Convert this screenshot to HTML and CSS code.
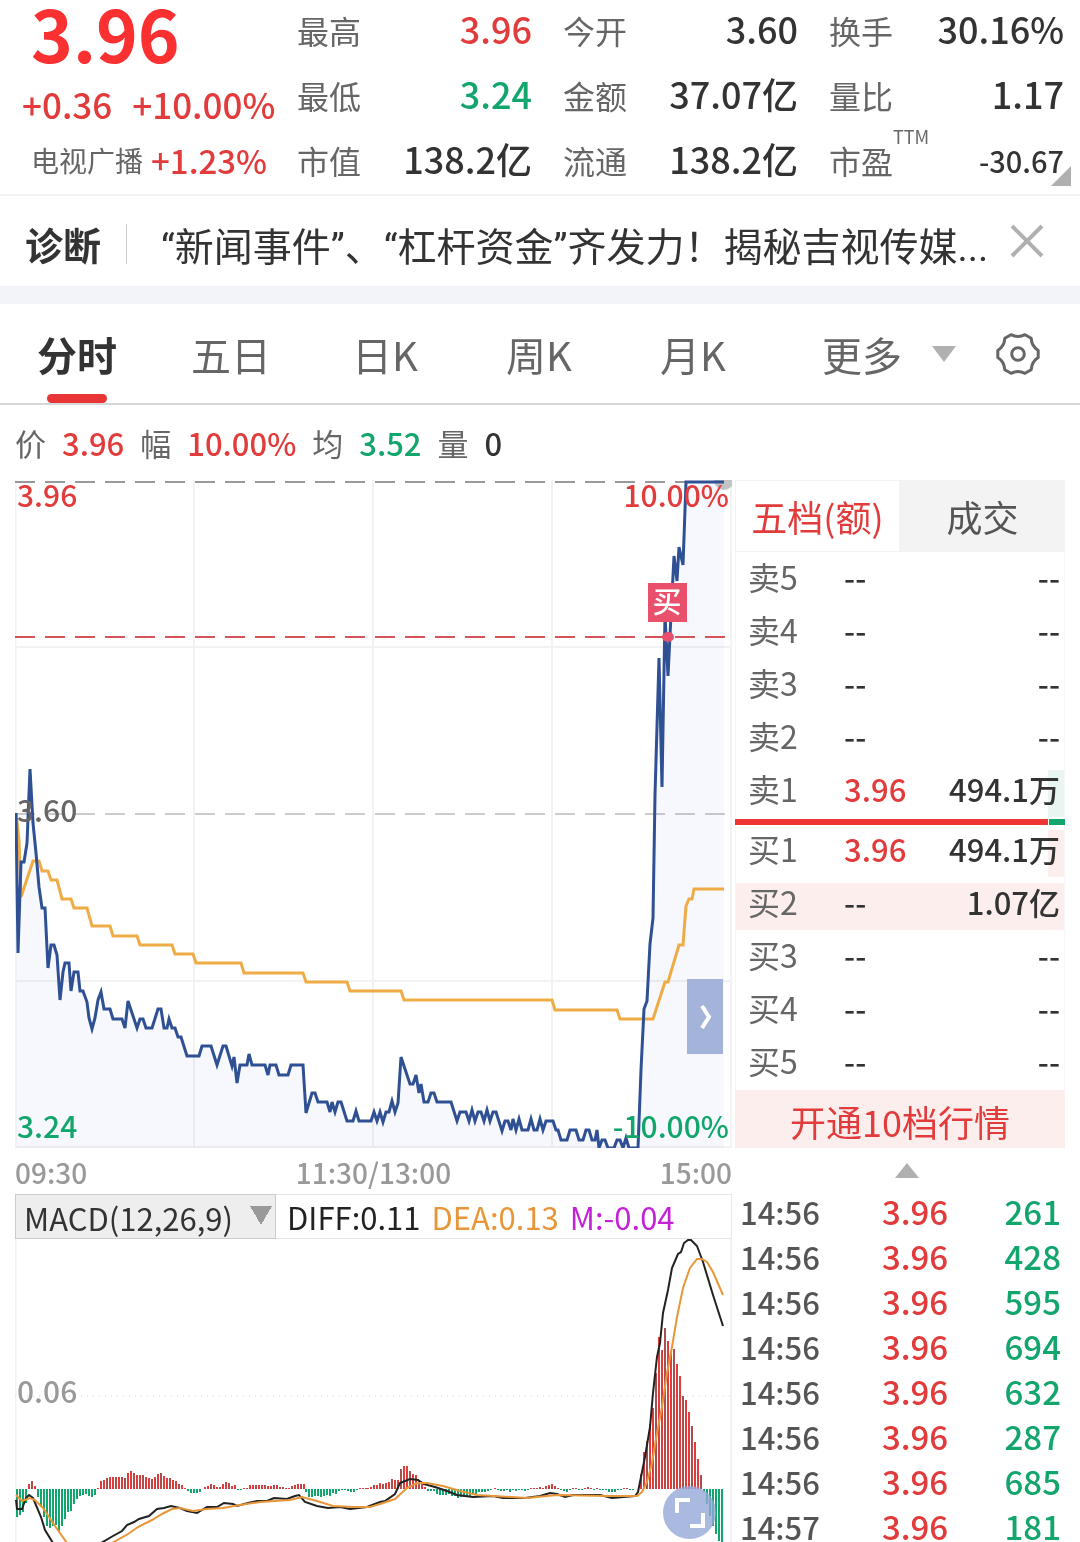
FILE: index.html
```html
<!DOCTYPE html>
<html lang="zh-CN">
<head>
    <meta charset="UTF-8">
    <meta name="viewport" content="width=device-width, initial-scale=1.0">
    <title>吉视传媒 分时</title>
    <link rel="stylesheet" href="styles.css">
</head>
<body>
<div class="page">

    <header class="quote">
        <div class="quote-main">
            <div class="price">3.96</div>
            <div class="change"><span>+0.36</span><span>+10.00%</span></div>
            <div class="sector"><span class="sector-name">电视广播</span><span>+1.23%</span></div>
        </div>
        <dl class="stats">
            <div><dt>最高</dt><dd class="up">3.96</dd></div>
            <div><dt>最低</dt><dd class="down">3.24</dd></div>
            <div><dt>市值</dt><dd>138.2亿</dd></div>
        </dl>
        <dl class="stats">
            <div><dt>今开</dt><dd>3.60</dd></div>
            <div><dt>金额</dt><dd>37.07亿</dd></div>
            <div><dt>流通</dt><dd>138.2亿</dd></div>
        </dl>
        <dl class="stats">
            <div><dt>换手</dt><dd>30.16%</dd></div>
            <div><dt>量比</dt><dd>1.17</dd></div>
            <div><dt>市盈<sup>TTM</sup></dt><dd class="small">-30.67</dd></div>
        </dl>
        <span class="corner"></span>
    </header>

    <div class="notice">
        <strong>诊断</strong>
        <a href="#news">“新闻事件”、“杠杆资金”齐发力！揭秘吉视传媒...</a>
        <button type="button" aria-label="关闭">
            <svg width="34" height="34" viewBox="0 0 34 34"><path d="M2 2L32 32M32 2L2 32" stroke="#b0b0b0" stroke-width="4" fill="none"/></svg>
        </button>
    </div>

    <nav class="tabs">
        <button type="button" class="tab active">分时</button>
        <button type="button" class="tab">五日</button>
        <button type="button" class="tab">日K</button>
        <button type="button" class="tab">周K</button>
        <button type="button" class="tab">月K</button>
        <button type="button" class="tab more">更多
            <svg width="24" height="16" viewBox="0 0 24 16"><path d="M0 0H24L12 16Z" fill="#b0b0b0"/></svg>
        </button>
        <button type="button" class="gear" aria-label="设置">
            <svg width="44" height="44" viewBox="0 0 44 44" fill="none" stroke="#666" stroke-width="3" stroke-linejoin="round">
                <path d="M42.2 25.6Q35.6 29.9 35.2 37.7L29 41.3Q22 37.7 15 41.3L8.8 37.7Q8.4 29.9 1.8 25.6V18.4Q8.4 14.1 8.8 6.3L15 2.7Q22 6.3 29 2.7L35.2 6.3Q35.6 14.1 42.2 18.4Z"/>
                <circle cx="22" cy="22" r="6.3"/>
            </svg>
        </button>
    </nav>

    <div class="info">
        <span>价</span><b class="up">3.96</b>
        <span>幅</span><b class="up">10.00%</b>
        <span>均</span><b class="down">3.52</b>
        <span>量</span><b>0</b>
    </div>

    <main class="board">
        <section class="charts">
            <div class="chart">
                <svg viewBox="15 480 717 668">
                    <path class="grid" d="M15.5 480V1148M194 480V1148M373 480V1148M552 480V1148M731 480V1148M15 647H732M15 981H732M15 1147H732"/>
                    <path class="dash dark" d="M15 482H725"/>
                    <path class="dash light" d="M15 814H725"/>
                    <circle cx="724" cy="480" r="10" fill="#c4c4c4"/>
                    <path class="area" id="area"/>
                    <path class="line avg" d="M16 813L19 840L21 897L33 861H39L42 871H48L51 880H57L62 899H71L74 908H87L92 926H110L113 936H137L140 945H172L175 954H193L196 963H241L244 973H303L306 982H347L350 991H401L404 1000H552L555 1010H617L620 1019H653L665 982H668L679 945H683L686 906L689 899H692L694 889H724"/>
                    <path class="line price-line" id="line" d="M16 813L18 953L21 862H24L27 843L30 769L33 823L36 853L39 887L42 908H45L48 968L51 945H54L57 955L60 1000L63 972L65 963H69L71 991L74 972H78L80 991H83L87 1002L89 1018L92 1029L95 1018L98 1000L101 992L104 1009H110L113 1019H122L125 1028L128 1001L137 1028L140 1019H143L146 1028H152L158 1009H161L164 1028H167L169 1019L172 1028H175L178 1037H181L187 1056H199L202 1046H211L217 1065L223 1046H226L232 1066L234 1057L237 1083L240 1065H247L249 1054L252 1065H265L268 1075L270 1065H276L279 1075H288L291 1065H303L306 1113L312 1093H315L318 1102H327L330 1112L332 1102L335 1112L338 1102H341L347 1121H353L356 1111L359 1121H371L374 1112L377 1121L380 1112L383 1122L386 1112H389L392 1101L395 1112L398 1103L401 1057L410 1084H413L416 1075L419 1093L421 1084L424 1102H428L431 1093H434L437 1102H451L457 1121L460 1112H466L469 1121L472 1110L475 1121L478 1112H481L484 1121L487 1110L490 1121L493 1112H496L502 1131L505 1121H508L511 1130L513 1119L516 1130L519 1119L522 1130H528L531 1119L534 1130H537L540 1119L543 1130L546 1121H553L556 1130H558L561 1140H567L570 1130H576L579 1140H583L586 1130H589L592 1140H595L597 1130L599 1148L602 1140H605L608 1148H614L617 1140H620L623 1148L626 1138L629 1148H638L641 1070L644 1009L647 1001L650 944L653 918L655 795L659 658L662 787L665 615L668 676L671 615L674 556L677 581L679 547L683 565L686 482H724"/>
                    <path class="dash red" d="M15 637H725"/>
                    <ellipse cx="668" cy="637" rx="6" ry="5" fill="#e8506b"/>
                    <rect x="648" y="583" width="39" height="39" fill="#e8506b"/>
                    <text class="mark" x="667" y="613" text-anchor="middle">买</text>
                </svg>
                <span class="tag top left up">3.96</span>
                <span class="tag top right up">10.00%</span>
                <span class="tag middle left">3.60</span>
                <span class="tag bottom left down">3.24</span>
                <span class="tag bottom right down">-10.00%</span>
                <button type="button" class="next" aria-label="展开">
                    <svg width="14" height="26" viewBox="0 0 14 26"><path d="M4 2L11 13L4 24" stroke="#fff" stroke-width="4" fill="none"/></svg>
                </button>
            </div>
            <div class="times"><span>09:30</span><span>11:30/13:00</span><span>15:00</span></div>
            <div class="macd-bar">
                <select aria-label="指标">
                    <option>MACD(12,26,9)</option>
                </select>
                <span>DIFF:0.11</span>
                <span class="dea">DEA:0.13</span>
                <span class="m">M:-0.04</span>
            </div>
            <div class="chart">
                <svg viewBox="15 1239 717 303">
                    <path class="grid" d="M15.5 1239V1542M731 1239V1542"/>
                    <path class="dots" d="M15 1396H731"/>
                    <g id="bars"></g>
                    <path class="macd diff-line" d="M16 1500L17 1509H22L26 1498L29 1495L33 1498L41 1517L45 1530L53 1543M101 1543L113 1536L122 1531L127 1525L134 1522L139 1519L149 1516L157 1509L164 1508L171 1506L180 1508L187 1511L197 1513L207 1507H217L224 1503L233 1504L237 1506L248 1503L257 1501H267L274 1498L287 1499L295 1496L299 1495L305 1502L317 1506L328 1508L340 1507L350 1509L367 1507L380 1502L385 1501L395 1494L400 1483L410 1479L418 1480L424 1484L435 1487L447 1491L457 1495L473 1497L493 1496L503 1498H525L540 1496L550 1493L557 1494L565 1497L573 1495H600L612 1498L635 1496L638 1492L645 1457L650 1427L653 1393L657 1357L660 1343L663 1313L668 1290L672 1268L678 1254L681 1252L684 1243L688 1240H691L697 1246L703 1262L713 1295L723 1326"/>
                    <path class="macd dea-line" d="M16 1495L22 1501L30 1498L35 1500L43 1508L55 1526L67 1543M112 1543L128 1534L138 1527L152 1520L162 1514L172 1509L180 1508L193 1511L207 1509L223 1508L240 1505L260 1502L290 1500L302 1497L317 1501L333 1506L353 1507H370L380 1504L395 1499L407 1488L417 1483H427L443 1486L460 1491L477 1495L527 1498L557 1495L607 1496H637L642 1492L647 1482L652 1463L657 1433L662 1407L667 1373L672 1347L677 1317L683 1288L690 1268L697 1259H702L707 1262L713 1272L723 1295"/>
                </svg>
                <span class="tag axis left">0.06</span>
                <button type="button" class="full" aria-label="全屏">
                    <svg width="30" height="30" viewBox="0 0 30 30"><path d="M2 15V2H15M28 15V28H15" stroke="#fff" stroke-width="4" fill="none"/></svg>
                </button>
            </div>
        </section>

        <section class="book">
            <div class="book-tabs">
                <button type="button" class="active">五档(额)</button>
                <button type="button">成交</button>
            </div>
            <table class="levels">
                <tr><th scope="row">卖5</th><td>--</td><td>--</td></tr>
                <tr><th scope="row">卖4</th><td>--</td><td>--</td></tr>
                <tr><th scope="row">卖3</th><td>--</td><td>--</td></tr>
                <tr><th scope="row">卖2</th><td>--</td><td>--</td></tr>
                <tr><th scope="row">卖1</th><td class="up">3.96</td><td>494.1万<i class="depth sell" style="width: 5%"></i></td></tr>
            </table>
            <div class="ratio"><span style="width: 95%"></span></div>
            <table class="levels">
                <tr><th scope="row">买1</th><td class="up">3.96</td><td>494.1万<i class="depth" style="width: 5%"></i></td></tr>
                <tr><th scope="row">买2</th><td>--</td><td>1.07亿<i class="depth" style="width: 100%"></i></td></tr>
                <tr><th scope="row">买3</th><td>--</td><td>--</td></tr>
                <tr><th scope="row">买4</th><td>--</td><td>--</td></tr>
                <tr><th scope="row">买5</th><td>--</td><td>--</td></tr>
            </table>
            <button type="button" class="open-ten">开通10档行情</button>
            <button type="button" class="fold" aria-label="收起">
                <svg width="24" height="15" viewBox="0 0 24 15"><path d="M12 0L24 15H0Z" fill="#b0b0b0"/></svg>
            </button>
            <table class="trades">
                <tr><td>14:56</td><td class="up">3.96</td><td class="down">261</td></tr>
                <tr><td>14:56</td><td class="up">3.96</td><td class="down">428</td></tr>
                <tr><td>14:56</td><td class="up">3.96</td><td class="down">595</td></tr>
                <tr><td>14:56</td><td class="up">3.96</td><td class="down">694</td></tr>
                <tr><td>14:56</td><td class="up">3.96</td><td class="down">632</td></tr>
                <tr><td>14:56</td><td class="up">3.96</td><td class="down">287</td></tr>
                <tr><td>14:56</td><td class="up">3.96</td><td class="down">685</td></tr>
                <tr><td>14:57</td><td class="up">3.96</td><td class="down">181</td></tr>
            </table>
        </section>
    </main>
</div>
<script src="chart.js"></script>
</body>
</html>
```
FILE: styles.css
```css
* {
    box-sizing: border-box;
}
body {
    margin: 0;
    background: #fff;
    color: #333;
    font-family: "Noto Sans CJK SC", sans-serif;
}
button, select {
    font-family: inherit;
    color: inherit;
    background: none;
    border: none;
    padding: 0;
    cursor: pointer;
}
svg {
    display: block;
}
.page {
    height: 100vh;
    overflow-y: auto;
    overflow-x: hidden;
    scrollbar-width: none;
}
.up {
    color: #e23b3b;
}
.down {
    color: #12a56c;
}

/* quote header */
.quote {
    position: relative;
    display: grid;
    grid-template-columns: minmax(0, 266fr) 235fr 235fr 235fr;
    column-gap: 31px;
    padding-right: 16px;
    height: 196px;
    border-bottom: 2px solid #f2f2f2;
}
.quote-main {
    color: #e23b3b;
    font-weight: 500;
    white-space: nowrap;
}
.price {
    height: 74px;
    padding-left: 31px;
    font-size: 71px;
    font-weight: 700;
    line-height: 64px;
    color: #fb3030;
}
.change {
    display: flex;
    gap: 20px;
    padding-left: 22px;
    font-size: 35px;
    line-height: 60px;
}
.sector {
    display: flex;
    gap: 8px;
    padding-left: 31px;
    font-size: 33px;
    line-height: 52px;
}
.sector-name {
    font-size: 28px;
    font-weight: 400;
    color: #666;
}
.stats {
    margin: 0;
}
.stats div {
    display: flex;
    justify-content: space-between;
    height: 65px;
    line-height: 60px;
    white-space: nowrap;
}
.stats dt {
    font-size: 32px;
    color: #666;
}
.stats dd {
    margin: 0;
    font-size: 36px;
    font-weight: 500;
    line-height: 56px;
}
.stats dd.small {
    font-size: 29px;
    line-height: 60px;
}
.stats sup {
    font-size: 18px;
    line-height: 0;
    vertical-align: 30px;
}
.corner {
    position: absolute;
    right: 9px;
    bottom: 8px;
    border-left: 20px solid transparent;
    border-bottom: 20px solid #b0b0b0;
}

/* notice */
.notice {
    display: flex;
    align-items: center;
    height: 108px;
    padding: 0 36px 0 25px;
    border-bottom: 18px solid #f2f4f9;
}
.notice strong {
    padding-right: 25px;
    border-right: 1px solid #ccc;
    font-size: 38px;
    line-height: 40px;
}
.notice strong, .notice a {
    margin-top: 6px;
}
.notice a {
    flex: 1;
    padding-left: 34px;
    font-family: Roboto, "Noto Sans CJK SC", sans-serif;
    font-size: 39px;
    color: #333;
    text-decoration: none;
    white-space: nowrap;
}

/* period tabs */
.tabs {
    display: grid;
    grid-template-columns: repeat(5, 154fr) 196fr 114fr;
    height: 101px;
    border-bottom: 2px solid #d8d8d8;
    color: #666;
}
.tab {
    position: relative;
    font-size: 40px;
}
.tab.active {
    font-weight: 700;
    color: #333;
}
.tab.active::after {
    content: "";
    position: absolute;
    left: 50%;
    bottom: 0;
    width: 60px;
    margin-left: -30px;
    height: 9px;
    border-radius: 5px;
    background: #e93535;
}
.tab.more {
    display: flex;
    align-items: center;
    justify-content: flex-end;
    gap: 30px;
    padding-right: 10px;
}
.gear {
    padding-right: 10px;
}

/* cursor values */
.info {
    display: flex;
    align-items: center;
    gap: 16px;
    height: 75px;
    padding-left: 15px;
    font-size: 31px;
}
.info span {
    color: #666;
}
.info b {
    font-weight: 500;
}

/* charts */
.board {
    display: grid;
    grid-template-columns: 717fr 330fr;
    gap: 3px;
    padding: 0 15px;
}
.chart {
    position: relative;
}
.chart > svg {
    width: 100%;
    height: auto;
}
.grid {
    stroke: #f2f2f2;
    stroke-width: 2;
}
.dash {
    stroke-width: 2;
    stroke-dasharray: 20 10;
}
.dash.dark {
    stroke: #999;
}
.dash.light {
    stroke: #ccc;
}
.dash.red {
    stroke: #d4545c;
}
.dots {
    stroke: #e8e8e8;
    stroke-width: 2;
    stroke-dasharray: 1 5;
}
.area {
    fill: #4a6fd4;
    fill-opacity: 0.05;
}
.line {
    fill: none;
    stroke-width: 3;
}
.price-line {
    stroke: #2f5093;
}
.avg {
    stroke: #efab45;
}
.macd {
    fill: none;
    stroke-width: 2;
}
.diff-line {
    stroke: #222;
}
.dea-line {
    stroke: #e8963a;
}
.mark {
    fill: #fff;
    font-size: 29px;
    font-weight: 500;
}
.tag {
    position: absolute;
    font-size: 30px;
    font-weight: 500;
    line-height: 36px;
}
.left {
    left: 2px;
}
.right {
    right: 3px;
}
.top {
    top: -4px;
}
.middle {
    top: calc(50% - 23px);
    color: #666;
}
.bottom {
    bottom: 5px;
}
.axis {
    top: calc(50% - 19px);
    color: #999;
}
.next {
    position: absolute;
    right: 9px;
    bottom: 94px;
    width: 36px;
    height: 75px;
    background: #a3b3da;
}
.next svg, .full svg, .gear svg, .fold svg {
    margin: auto;
}
.full {
    position: absolute;
    right: 16px;
    bottom: 3px;
    width: 53px;
    height: 53px;
    border-radius: 50%;
    background: rgba(148, 168, 216, 0.8);
}
.times {
    display: flex;
    justify-content: space-between;
    height: 46px;
    font-size: 28px;
    font-weight: 500;
    line-height: 48px;
    color: #999;
}
.macd-bar {
    display: flex;
    align-items: center;
    gap: 11px;
    height: 45px;
    border: 1px solid #e8e8e8;
    border-left: 0;
    font-size: 31px;
    line-height: 43px;
    white-space: nowrap;
    color: #222;
}
.macd-bar select {
    appearance: none;
    width: 261px;
    height: 45px;
    padding-left: 8px;
    border: 1px solid #ccc;
    font-size: 31px;
    color: #333;
    background: linear-gradient(to bottom left, #999 50%, transparent 50%) 234px 11px / 11px 19px no-repeat,
        linear-gradient(to bottom right, #999 50%, transparent 50%) 245px 11px / 11px 19px no-repeat,
        #eee;
}
.dea {
    color: #e8963a;
}
.m {
    color: #c322d6;
}

/* order book */
.book-tabs {
    display: grid;
    grid-template-columns: 1fr 1fr;
    height: 73px;
    padding-bottom: 1px;
}
.book-tabs button {
    font-size: 36px;
    color: #555;
    background: #f3f3f3;
}
.book-tabs .active {
    color: #e23b3b;
    background: #fff;
    border: 1px solid #f2f2f2;
}
table {
    width: 100%;
    border-collapse: collapse;
    table-layout: fixed;
}
th, td {
    padding: 0;
    text-align: left;
    font-weight: 500;
    white-space: nowrap;
}
.levels {
    border: 1px solid #f6f6f6;
    border-width: 0 1px;
    font-size: 31px;
}
.levels tr {
    position: relative;
    height: 53px;
    line-height: 47px;
    vertical-align: top;
}
.levels th {
    width: 33%;
    padding-left: 12px;
    font-size: 32px;
    font-weight: 400;
    color: #666;
}
.levels td:nth-child(2) {
    width: 25%;
}
.levels td:last-child {
    padding-right: 4px;
    text-align: right;
}
.depth {
    position: absolute;
    z-index: -1;
    right: 0;
    top: 5px;
    bottom: 1px;
    background: #fdeeee;
}
.depth.sell {
    background: #e8f6ef;
}
.ratio {
    height: 6px;
    margin-top: 1px;
    background: #12a56c;
}
.ratio span {
    display: block;
    height: 6px;
    background: #f03434;
    border-right: 1px solid #fff;
}
.open-ten {
    width: 100%;
    height: 58px;
    padding-top: 4px;
    font-size: 36px;
    line-height: 50px;
    color: #e23b3b;
    background: #fdeeee;
}
.fold {
    width: 100%;
    height: 36px;
    padding: 9px 0 0 14px;
}
.trades {
    font-size: 33px;
    color: #555;
}
.trades td {
    height: 45px;
    padding-left: 5px;
    line-height: 45px;
}
.trades td:nth-child(1) {
    width: 43%;
    font-size: 31px;
}
.trades td:nth-child(2) {
    width: 25%;
}
.trades td:last-child {
    padding-right: 4px;
    text-align: right;
}
```
FILE: chart.js
```javascript
// fill under the price line
const d = document.getElementById('line').getAttribute('d');
document.getElementById('area').setAttribute('d', d + 'V1148H16Z');

// MACD histogram: [start x, values], 3 units per minute
const runs = [
    [16, [-28, -26, -23, -14, 5, 8, 3, -8, -18, -28, -37, -39, -37, -36, -42, -37, -30, -23, -22, -15, -10, -7, -6, -5, -7, -8, -6, 1]],
    [100, [8, 9, 11, 12, 12, 12, 12, 12, 11, 16, 18, 16, 14, 14, 14, 12, 11, 10, 12, 15, 16, 13, 11, 11, 9, 8, 5, 4, 1, -2, -4, -4, -4, -3]],
    [204, [2, 3, 5, 4, 2, 2, 5, 7, 6, 3, 4, -1, -1, 1, 1, 4, 4, 4, 4, 4, 4, 3, 3, 4, 4, 2, 2, 1, 1, 3, 4, 5, 5, 5]],
    [305, [-3, -8, -8, -7, -7, -8, -7, -6, -7, -4, -5, -2, -1, -1, -2, -3, -3, -1, 1, 1, 1]],
    [367, [1, 2, 4, 4, 6, 5, 6, 7, 10, 9, 9, 20, 23, 23, 18, 15, 14, 9, 6, 2, -2, -2, -2, -5, -6, -6, -6, -5, -7, -7, -9, -8, -8, -7, -7, -6, -5, -3, -3, -3, -2, -1]],
    [494, [1, -1, -2, -2, -1, -3, -1, -2, -1, -1, -2, -1, 1, 1, 1, 2, 1, 3, 4, 5, 3, 1, -1, -2, -3, -1, 1, 1, -1, -1, 1, 2, 1, -1, 1, -1, -1, -1, -3, -3, -3, -1, -1, 1, 1, -1, -1]],
    [640, [15, 37, 48, 65, 81, 116, 152, 139, 161, 148, 138, 140, 125, 113, 93, 89, 77, 63, 47, 30, 14, -3, -15, -27, -37, -45, -52, -53]]
];

let html = '';
runs.forEach(([start, values]) => {
    values.forEach((v, i) => {
        const y = v > 0 ? 1489 - v : 1489;
        const color = v < 0 ? '#12a56c' : i % 3 == 2 ? '#a85050' : '#e23b3b';
        html += `<rect x="${start + i * 3}" y="${y}" width="2" height="${Math.abs(v)}" fill="${color}"/>`;
    });
});
document.getElementById('bars').innerHTML = html;
```
